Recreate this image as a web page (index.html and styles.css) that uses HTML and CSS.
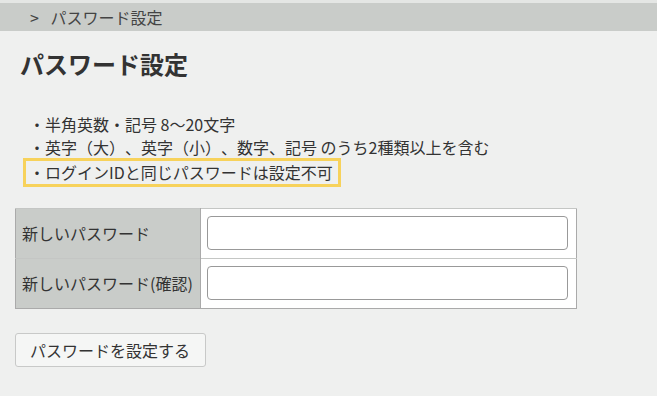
FILE: index.html
```html
<!DOCTYPE html>
<html lang="ja">

<head>
	<meta charset="UTF-8" />
	<title>パスワード設定</title>
	<link rel="stylesheet" href="styles.css">
</head>

<body>
	<!-- breadcrumb -->
	<div class="crumbs">
		<span class="crumb-arrow">&gt;</span> パスワード設定
	</div>

	<div class="content">
		<h1 class="page-title">パスワード設定</h1>

		<ul class="rules">
			<li>・半角英数・記号 8～20文字</li>
			<li>・英字（大）、英字（小）、数字、記号 のうち2種類以上を含む</li>
			<li><span class="notice">・ログインIDと同じパスワードは設定不可</span></li>
		</ul>

		<form class="pw-form" onsubmit="return false">
			<table class="pw-table">
				<tbody>
					<tr>
						<th>新しいパスワード</th>
						<td><input class="pw-input" type="password" name="password"></td>
					</tr>
					<tr>
						<th>新しいパスワード(確認)</th>
						<td><input class="pw-input" type="password" name="password_confirm"></td>
					</tr>
				</tbody>
			</table>

			<button class="button" type="submit">パスワードを設定する</button>
		</form>
	</div>
</body>

</html>
```

FILE: styles.css
```css
html,
body {
	margin: 0;
	padding: 0;
	background-color: #eff0ef;
}

body {
	font-family: "Noto Sans CJK JP", "Noto Sans", sans-serif;
	font-size: 16px;
	color: #333;
	text-spacing-trim: space-all;
	font-kerning: none;
}

.crumbs {
	border-top: 3px solid #e4e6e4;
	background-color: #c9ccc9;
	height: 28px;
	line-height: 28px;
	padding-left: 30px;
	color: #444;
	font-size: 16px;
}

.crumb-arrow {
	display: inline-block;
	margin-right: 8px;
}

.content {
	padding: 0 15px;
}

.page-title {
	margin: 17px 0 0 5px;
	font-size: 24px;
	line-height: 32px;
	font-weight: bold;
	color: #333;
}

.rules {
	list-style-type: none;
	margin: 33px 0 0;
	padding: 0 0 0 14px;
	line-height: 23px;
}

.rules li {
	white-space: nowrap;
}

.notice {
	display: inline-block;
	margin: -1px 0 0 -6px;
	padding: 0 5px 0 3px;
	border: 3px solid #f7d25b;
}

.pw-table {
	margin-top: 21px;
	border-collapse: collapse;
	width: 562px;
	background-color: #fff;
	border: 1px solid #aaa;
}

.pw-table th,
.pw-table td {
	border-top: 1px solid #c4c6c4;
	padding: 7px 8px 8px 6px;
	height: 34px;
}

.pw-table th {
	width: 171px;
	text-align: left;
	font-weight: normal;
	background-color: #c9ccc9;
	border-right: 1px solid #aaa;
	white-space: nowrap;
	padding: 7px 7px 8px 6px;
}

.pw-input {
	display: block;
	box-sizing: border-box;
	width: 100%;
	height: 34px;
	margin: 0;
	border: 1px solid #999;
	border-radius: 4px;
	background-color: #fff;
	font-size: 16px;
}

.button {
	margin-top: 24px;
	height: 34px;
	padding: 0 15px 0 14px;
	background-color: #f5f6f5;
	border: 1px solid #c8c9c8;
	border-radius: 3px;
	color: #333;
	font-family: "Noto Sans CJK JP", "Noto Sans", sans-serif;
	font-size: 16px;
	line-height: 32px;
	text-spacing-trim: space-all;
}
```
